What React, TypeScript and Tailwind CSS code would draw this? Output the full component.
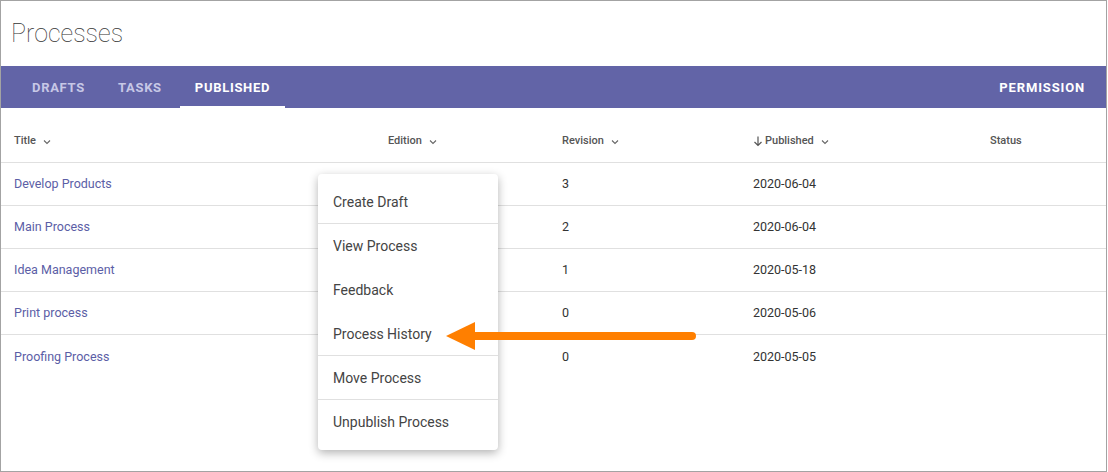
import React from "react";

const rows = [
  { title: "Develop Products", rev: "3", date: "2020-06-04" },
  { title: "Main Process", rev: "2", date: "2020-06-04" },
  { title: "Idea Management", rev: "1", date: "2020-05-18" },
  { title: "Print process", rev: "0", date: "2020-05-06" },
  { title: "Proofing Process", rev: "0", date: "2020-05-05" },
];

const menu: { label: string; divider?: boolean }[] = [
  { label: "Create Draft", divider: true },
  { label: "View Process" },
  { label: "Feedback" },
  { label: "Process History", divider: true },
  { label: "Move Process", divider: true },
  { label: "Unpublish Process" },
];

const cols = "grid grid-cols-[374px_174px_191px_237px_1fr] pl-[13px]";

function Chevron() {
  return (
    <svg width="10" height="10" viewBox="0 0 10 10" className="ml-[6px] mt-[1px]">
      <path d="M2 3.5 L5 6.5 L8 3.5" fill="none" stroke="#666" strokeWidth="1.1" />
    </svg>
  );
}

function Head({ label, arrow }: { label: string; arrow?: boolean }) {
  return (
    <div className="flex items-center">
      {arrow && (
        <svg width="12" height="12" viewBox="0 0 12 12" className="mr-[1px]">
          <path d="M6 1.5 V10.5 M2.5 7 L6 10.5 L9.5 7" fill="none" stroke="#555" strokeWidth="1.2" />
        </svg>
      )}
      <span>{label}</span>
      <Chevron />
    </div>
  );
}

export default function App() {
  return (
    <div className="relative w-[1107px] h-[472px] border border-[#a3a3a3] bg-white overflow-hidden font-['Roboto',sans-serif]">
      <div className="h-[65px] pl-[10px] pt-[17px] text-[25px] font-thin text-[#333] leading-[32px]">
        Processes
      </div>
      <div className="h-[42px] bg-[#6264a7] flex items-stretch pl-[12px] pr-[21px] text-[13px] font-bold tracking-[0.7px] uppercase">
        <div className="px-[19px] flex items-center pt-[2px] text-[#c7c8e6]">Drafts</div>
        <div className="px-[14px] flex items-center pt-[2px] text-[#c7c8e6]">Tasks</div>
        <div className="ml-[4px] px-[15px] flex items-center text-white border-b-2 border-white pt-[4px]">Published</div>
        <div className="ml-auto flex items-center pt-[2px] text-white tracking-[0.85px]">Permission</div>
      </div>
      <div className={`${cols} h-[55px] items-center text-[11px] font-medium text-[#555] border-b border-[#e0e0e0] pt-[12px]`}>
        <Head label="Title" />
        <Head label="Edition" />
        <Head label="Revision" />
        <div className="-ml-[1px]"><Head label="Published" arrow /></div>
        <div>Status</div>
      </div>
      {rows.map((r, i) => (
        <div
          key={r.title}
          className={`${cols} h-[43px] items-center pt-[1px] text-[12.5px] ${i < rows.length - 1 ? "border-b border-[#e0e0e0]" : ""}`}
        >
          <div className="text-[#5b5ea6]">{r.title}</div>
          <div />
          <div className="text-[#333]">{r.rev}</div>
          <div className="text-[#333]">{r.date}</div>
          <div />
        </div>
      ))}

      <div className="absolute left-[317px] top-[173px] w-[180px] bg-white rounded-[4px] shadow-[0_3px_10px_rgba(0,0,0,0.3)] pt-[6px] pb-[6px]">
        {menu.map((m) => (
          <div
            key={m.label}
            className={`h-[44px] flex items-center pl-[15px] pt-[1px] text-[14px] text-[#444] ${m.divider ? "border-b border-[#e0e0e0]" : ""}`}
          >
            {m.label}
          </div>
        ))}
      </div>

      <svg className="absolute left-[444px] top-[318px]" width="256" height="34" viewBox="0 0 256 34">
        <line x1="28" y1="17" x2="247" y2="17" stroke="#ff7f00" strokeWidth="8" strokeLinecap="round" />
        <polygon points="1,17 30,3 30,31" fill="#ff7f00" />
      </svg>
    </div>
  );
}
